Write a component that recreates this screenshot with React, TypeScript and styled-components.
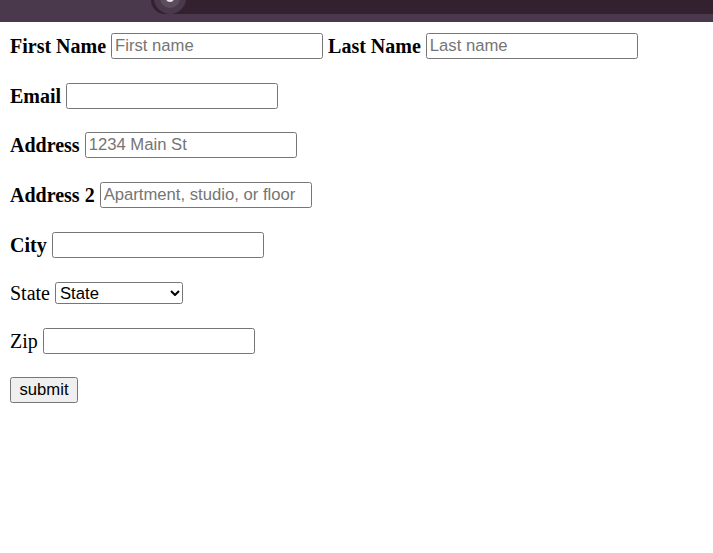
import * as React from "react"
import styled, { createGlobalStyle } from "styled-components"

const GlobalStyle = createGlobalStyle`
  html, body {
    margin: 0;
    padding: 0;
    background: #fff;
  }
  body {
    font-family: "Liberation Serif", "Times New Roman", serif;
  }
`

const ChromeBar = styled.div`
  height: 22px;
  background: #4a394d;
  display: flex;
  overflow: hidden;
`

const Omnibox = styled.div`
  position: relative;
  margin-left: 151px;
  flex: 1;
  height: 14px;
  background: #342130;
  border-bottom-left-radius: 14px;
`

const SiteIcon = styled.svg`
  position: absolute;
  left: 2px;
  top: -19px;
`

const Form = styled.form`
  display: flex;
  flex-direction: column;
  gap: 24px;
  padding: 11px 10px;
`

// $tight pulls a row up by a pixel where the original line boxes were shorter
const Row = styled.div<{ $h?: number; $tight?: boolean }>`
  display: flex;
  align-items: center;
  gap: 5px;
  height: ${(p) => p.$h ?? 26}px;
  margin-top: ${(p) => (p.$tight ? -1 : 0)}px;
`

const Label = styled.label<{ $bold?: boolean }>`
  font-size: 20px;
  font-weight: ${(p) => (p.$bold ? 700 : 400)};
  color: #000;
  white-space: nowrap;
`

const Field = styled.input`
  box-sizing: border-box;
  width: 212px;
  height: 26px;
  margin: 0;
  padding: 1px 3px;
  border: 1px solid #767676;
  border-radius: 2.5px;
  font-family: "Liberation Sans", Arial, sans-serif;
  font-size: 16.67px;
  color: #000;
  background: #fff;
  outline: none;
  &::placeholder {
    color: #757575;
  }
`

const SelectWrap = styled.div`
  position: relative;
  width: 128px;
  height: 22px;
`

const Select = styled.select`
  appearance: none;
  box-sizing: border-box;
  width: 128px;
  height: 22px;
  margin: 0;
  padding: 0 0 0 4px;
  border: 1px solid #767676;
  border-radius: 2.5px;
  background: #fff;
  font-family: "Liberation Sans", Arial, sans-serif;
  font-size: 16.67px;
  color: #000;
  outline: none;
`

const Chevron = styled.svg`
  position: absolute;
  right: 3px;
  top: 8px;
  pointer-events: none;
`

const Submit = styled.button`
  box-sizing: border-box;
  height: 26px;
  width: 68px;
  padding: 0 7px;
  border: 1px solid #767676;
  border-radius: 2.5px;
  background: #efefef;
  font-family: "Liberation Sans", Arial, sans-serif;
  font-size: 16.67px;
  color: #000;
`

export default function App() {
  return (
    <>
      <GlobalStyle />
      <ChromeBar>
        <Omnibox>
          <SiteIcon width="34" height="34" viewBox="0 0 34 34">
            <circle cx="17" cy="17" r="16" fill="#4a394d" />
            <circle cx="17" cy="17" r="10" fill="#5c4d5e" />
            <circle cx="17" cy="17" r="4" fill="#e8e4ea" />
          </SiteIcon>
        </Omnibox>
      </ChromeBar>
      <Form onSubmit={(e) => e.preventDefault()}>
        <Row>
          <Label $bold>First Name</Label>
          <Field placeholder="First name" />
          <Label $bold>Last Name</Label>
          <Field placeholder="Last name" />
        </Row>
        <Row>
          <Label $bold>Email</Label>
          <Field type="email" />
        </Row>
        <Row $tight>
          <Label $bold>Address</Label>
          <Field placeholder="1234 Main St" />
        </Row>
        <Row>
          <Label $bold>Address 2</Label>
          <Field placeholder="Apartment, studio, or floor" />
        </Row>
        <Row>
          <Label $bold>City</Label>
          <Field />
        </Row>
        <Row $h={22}>
          <Label>State</Label>
          <SelectWrap>
            <Select defaultValue="State">
              <option>State</option>
            </Select>
            <Chevron width="10" height="6" viewBox="0 0 10 6">
              <path d="M1 1l4 4 4-4" fill="none" stroke="#000" strokeWidth="2" />
            </Chevron>
          </SelectWrap>
        </Row>
        <Row>
          <Label>Zip</Label>
          <Field />
        </Row>
        <Row $tight>
          <Submit type="submit">submit</Submit>
        </Row>
      </Form>
    </>
  )
}
